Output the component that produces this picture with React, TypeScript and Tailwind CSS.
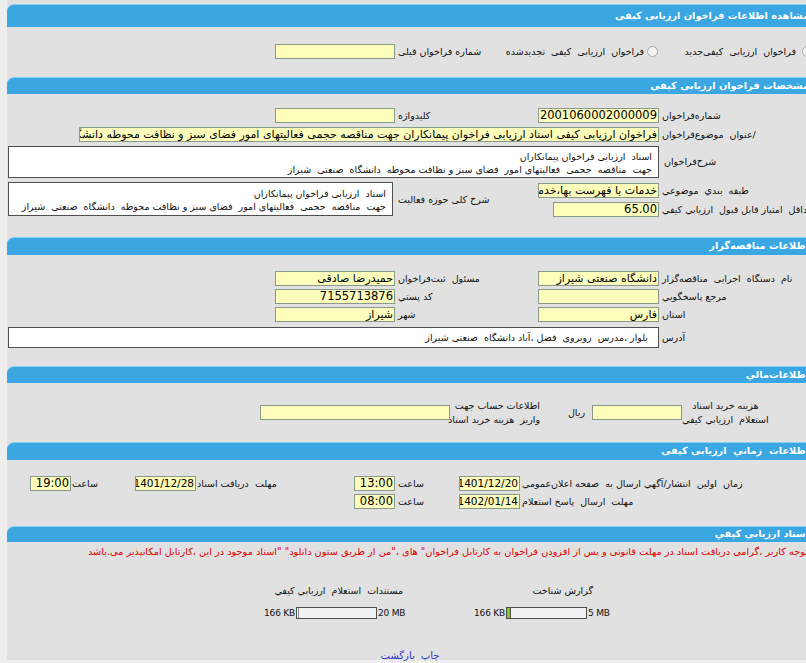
import React from "react";

const lbl = "text-[9.5px] leading-[14px] text-[#111] whitespace-pre";

function Head({ children, h, cls = "" }: { children: React.ReactNode; h: string; cls?: string }) {
  return (
    <div
      className={`${h} ${cls} shrink-0 rounded-t-[7px] bg-[#3aa7e3] border-t border-[#8ad0f4] flex items-center pr-[4px] text-white font-bold text-[9.75px] whitespace-pre overflow-hidden`}
    >
      {children}
    </div>
  );
}

function Inp({ w, children, t = "text-[11px]" }: { w: string; children?: React.ReactNode; t?: string }) {
  return (
    <div
      className={`${w} ${t} h-[15px] shrink-0 border border-[#8a9a8a] bg-[#fdfdbc] px-[1px] leading-[13px] text-black whitespace-pre overflow-hidden`}
    >
      {children}
    </div>
  );
}

function L({ w, children, cls = "" }: { w: string; children?: React.ReactNode; cls?: string }) {
  return <div className={`${w} ${cls} shrink-0 flex justify-end items-center ${lbl}`}>{children}</div>;
}

function Radio() {
  return <span className="inline-block shrink-0 w-[11px] h-[11px] rounded-full border border-[#a9a9a9] bg-[#f3f3f3]" />;
}

function Box({ w, h, children, cls = "" }: { w: string; h: string; children?: React.ReactNode; cls?: string }) {
  return (
    <div
      className={`${w} ${h} ${cls} shrink-0 bg-white border border-[#4f4f4f] text-[9.5px] leading-[13px] text-[#111] whitespace-pre overflow-hidden`}
    >
      {children}
    </div>
  );
}

function Bar({ fill }: { fill: boolean }) {
  return (
    <div className="w-[81px] h-[12px] shrink-0 border border-[#4d4d4d] bg-[#f1f1f1] flex">
      {fill ? (
        <div className="w-[4px] h-full bg-[#8fc31f] border-r border-[#4d4d4d]" />
      ) : (
        <div className="w-[2px] h-full border-r border-[#8a8a8a]" />
      )}
    </div>
  );
}

export default function App() {
  return (
    <div className="w-[806px] h-[663px] overflow-hidden bg-[#eeeeee] font-['DejaVu_Sans',sans-serif]">
      <div dir="rtl" className="ml-[7px] w-[806px] h-[660px] bg-[#e1e1e1] flex flex-col pt-[4px]">
        {/* Section 1 */}
        <Head h="h-[23px]">مشاهده اطلاعات فراخوان ارزیابی کیفی</Head>
        <div className="mt-[17px] h-[15px] flex items-center">
          <div className={`w-[153px] shrink-0 flex items-center gap-[6px] ${lbl}`}>
            <Radio />
            <span>فراخوان  ارزیابی  کیفی‌جدید</span>
          </div>
          <div className={`w-[180px] shrink-0 flex items-center gap-[3px] pr-[2px] ${lbl}`}>
            <Radio />
            <span>فراخوان  ارزیابی  کیفی  تجدیدشده</span>
          </div>
          <L w="w-[85px]" cls="pl-[3px]">شماره فراخوان قبلی</L>
          <Inp w="w-[120px]" />
        </div>

        {/* Section 2 */}
        <Head h="h-[17px]" cls="mt-[18px]">مشخصات فراخوان ارزیابی کیفی</Head>
        <div className="mt-[14px] flex items-center">
          <L w="w-[154px]" cls="pl-[3px]">شماره‌فراخوان</L>
          <Inp w="w-[121px]" t="text-[11.5px]">2001060002000009</Inp>
          <L w="w-[143px]" cls="pl-[3px]">کلیدواژه</L>
          <Inp w="w-[120px]" />
        </div>
        <div className="mt-[4px] flex items-center">
          <L w="w-[154px]" cls="pl-[3px]">/عنوان  موضوع‌فراخوان</L>
          <Inp w="w-[580px]">
            فراخوان ارزیابی کیفی اسناد ارزیابی فراخوان پیمانکاران جهت مناقصه حجمی فعالیتهای امور فضای سبز و نظافت محوطه دانشگاه صنعتی شیراز
          </Inp>
        </div>
        <div className="mt-[4px] flex items-center">
          <L w="w-[154px]" cls="pl-[5px]">شرح‌فراخوان</L>
          <Box w="w-[651px]" h="h-[32px]" cls="pr-[6px] pt-[3px]">
            {"اسناد  ارزیابی فراخوان پیمانکاران\nجهت  مناقصه  حجمی  فعالیتهای امور  فضای سبز و نظافت محوطه  دانشگاه  صنعتی  شیراز"}
          </Box>
        </div>
        <div className="mt-[4px] flex">
          <div className="w-[275px] shrink-0 flex flex-col">
            <div className="mt-[1px] flex items-center">
              <L w="w-[154px]" cls="pl-[3px]">طبقه  بندي  موضوعي</L>
              <Inp w="w-[121px]">خدمات با فهرست بها،خدمات مشاوره</Inp>
            </div>
            <div className="mt-[4px] flex items-center">
              <L w="w-[154px]" cls="pl-[3px]">حداقل  امتیاز قابل قبول  ارزیابي کیفي</L>
              <Inp w="w-[106px]" t="text-[11.5px]">65.00</Inp>
            </div>
          </div>
          <L w="w-[145px]" cls="pl-[5px]">شرح کلی حوزه فعالیت</L>
          <Box w="w-[385px]" h="h-[34px]" cls="pr-[6px] pt-[4px]">
            {"اسناد  ارزیابی فراخوان پیمانکاران\nجهت  مناقصه  حجمی  فعالیتهای امور  فضای سبز و نظافت محوطه  دانشگاه  صنعتی  شیراز"}
          </Box>
        </div>

        {/* Section 3 */}
        <Head h="h-[18px]" cls="mt-[20px]">اطلاعات مناقصه‌گزار</Head>
        <div className="mt-[16px] flex items-center">
          <L w="w-[154px]" cls="pl-[3px]">نام  دستگاه  اجرایی  مناقصه‌گزار</L>
          <Inp w="w-[121px]">دانشگاه صنعتی شیراز</Inp>
          <L w="w-[143px]" cls="pl-[3px]">مسئول  ثبت‌فراخوان</L>
          <Inp w="w-[120px]">حمیدرضا صادقی</Inp>
        </div>
        <div className="mt-[3px] flex items-center">
          <L w="w-[154px]" cls="pl-[3px]">مرجع پاسخگویي</L>
          <Inp w="w-[121px]" />
          <L w="w-[143px]" cls="pl-[3px]">کد پستي</L>
          <Inp w="w-[120px]" t="text-[11.5px]">7155713876</Inp>
        </div>
        <div className="mt-[3px] flex items-center">
          <L w="w-[154px]" cls="pl-[3px]">استان</L>
          <Inp w="w-[121px]">فارس</Inp>
          <L w="w-[143px]" cls="pl-[3px]">شهر</L>
          <Inp w="w-[120px]">شیراز</Inp>
        </div>
        <div className="mt-[5px] flex items-center">
          <L w="w-[154px]" cls="pl-[3px]">آدرس</L>
          <Box w="w-[651px]" h="h-[21px]" cls="pr-[10px] pt-[3px]">
            بلوار ،مدرس  روبروی  فضل ،آباد دانشگاه  صنعتی شیراز
          </Box>
        </div>

        {/* Section 4 */}
        <Head h="h-[17px]" cls="mt-[18px]">اطلاعات‌مالي</Head>
        <div className="mt-[17px] h-[25px] flex items-center">
          <div className="w-[131px] shrink-0 flex justify-end items-center">
            <div className={`${lbl} leading-[13px] text-center`}>{"هزینه خرید اسناد\nاستعلام  ارزیابي کیفي"}</div>
          </div>
          <Inp w="w-[90px]" />
          <div className={`w-[52px] shrink-0 pr-[7px] ${lbl}`}>ریال</div>
          <div className={`w-[90px] shrink-0 ${lbl} leading-[13px]`}>{"اطلاعات حساب جهت\nواریز  هزینه خرید اسناد"}</div>
          <Inp w="w-[190px]" />
        </div>

        {/* Section 5 */}
        <Head h="h-[18px]" cls="mt-[17px]">اطلاعات  زماني  ارزیابی کیفی</Head>
        <div className="mt-[16px] flex items-center">
          <L w="w-[293px]" cls="pl-[2px]">زمان  اولین  انتشار/آگهي ارسال به  صفحه اعلان‌عمومي</L>
          <Inp w="w-[61px]" t="text-[10.5px]">1401/12/20</Inp>
          <L w="w-[64px]" cls="pl-[3px]">ساعت</L>
          <Inp w="w-[41px]" t="text-[11.5px]">13:00</Inp>
          <L w="w-[158px]" cls="pl-[1px]">مهلت  دریافت اسناد</L>
          <Inp w="w-[61px]" t="text-[10.5px]">1401/12/28</Inp>
          <L w="w-[64px]" cls="pl-[1px]">ساعت</L>
          <Inp w="w-[41px]" t="text-[11.5px]">19:00</Inp>
        </div>
        <div className="mt-[3px] flex items-center">
          <L w="w-[293px]" cls="pl-[2px]">مهلت  ارسال  پاسخ استعلام</L>
          <Inp w="w-[61px]" t="text-[10.5px]">1402/01/14</Inp>
          <L w="w-[64px]" cls="pl-[3px]">ساعت</L>
          <Inp w="w-[41px]" t="text-[11.5px]">08:00</Inp>
        </div>

        {/* Section 6 */}
        <Head h="h-[16px]" cls="mt-[17px]">اسناد ارزیابي کیفي</Head>
        <div className="mt-[3px] pr-[5px] text-[9.75px] leading-[14px] text-[#e00000] whitespace-pre">
          توجه کاربر ،گرامی دریافت اسناد در مهلت قانونی و پس از افزودن فراخوان به کارتابل فراخوان" های ،"من از طریق ستون دانلود" "اسناد موجود در این ،کارتابل امکانپذیر می.باشد
        </div>
        <div className={`mt-[25px] flex ${lbl}`}>
          <div className="w-[220px] shrink-0" />
          <div className="w-[190px] shrink-0">گزارش شناخت</div>
          <div className="shrink-0">مستندات  استعلام  ارزیابي کیفي</div>
        </div>
        <div className="mt-[9px] h-[12px] flex items-center">
          <div className="w-[203px] shrink-0" />
          <div dir="ltr" className="w-[136px] shrink-0 flex items-center text-[9px] leading-[12px] tracking-[-0.2px] text-[#111] whitespace-pre">
            <div className="w-[31px] shrink-0 text-right">166 KB</div>
            <div className="ml-[1px]">
              <Bar fill={true} />
            </div>
            <div className="ml-[1px]">5 MB</div>
          </div>
          <div className="w-[69px] shrink-0" />
          <div dir="ltr" className="w-[141px] shrink-0 flex items-center text-[9px] leading-[12px] tracking-[-0.2px] text-[#111] whitespace-pre">
            <div className="w-[31px] shrink-0 text-right">166 KB</div>
            <div className="ml-[1px]">
              <Bar fill={false} />
            </div>
            <div className="ml-[1px]">20 MB</div>
          </div>
        </div>
        <div className="mt-[30px] flex justify-center gap-[6px] text-[10px] leading-[14px] text-[#3434cc]">
          <span>چاپ</span>
          <span>بازگشت</span>
        </div>
      </div>
    </div>
  );
}
